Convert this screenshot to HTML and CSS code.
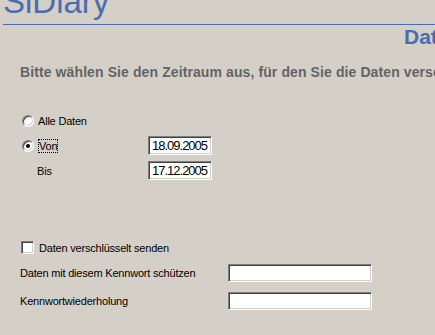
FILE: index.html
```html
<!DOCTYPE html>
<html lang="de">
<head>
    <meta charset="UTF-8">
    <title>SiDiary - Daten senden</title>
    <link rel="stylesheet" href="styles.css">
</head>
<body>
    <div class="header">
        <div class="logo">SiDiary</div>
    </div>
    <h2 class="page-title">Daten senden</h2>
    <p class="intro">Bitte wählen Sie den Zeitraum aus, für den Sie die Daten verschicken möchten.</p>

    <div class="range">
        <div class="range-row">
            <label class="option"><span class="radio"></span><span>Alle Daten</span></label>
            <span></span>
        </div>
        <div class="range-row">
            <label class="option"><span class="radio checked"></span><span class="focus">Von</span></label>
            <span class="field date">18.09.2005</span>
        </div>
        <div class="range-row">
            <span class="sub-label">Bis</span>
            <span class="field date">17.12.2005</span>
        </div>
    </div>

    <label class="option encrypt"><span class="checkbox"></span><span>Daten verschlüsselt senden</span></label>

    <div class="password">
        <span>Daten mit diesem Kennwort schützen</span>
        <span class="field wide"></span>
        <span>Kennwortwiederholung</span>
        <span class="field wide"></span>
    </div>
</body>
</html>
```

FILE: styles.css
```css
body {
    margin: 0;
    padding: 0;
    background-color: #d4d0c8;
    font-family: "Liberation Sans", Arial, sans-serif;
    font-size: 11px;
    letter-spacing: -0.2px;
    color: #000;
    overflow: hidden;
    width: 435px;
    height: 335px;
}

.header {
    margin-left: 3px;
}

.logo {
    height: 24px;
    line-height: 4px;
    font-size: 33px;
    letter-spacing: 0;
    color: #4a6cb0;
    border-bottom: 1px solid #4a6cb0;
    white-space: nowrap;
    overflow: visible;
}

.page-title {
    margin: 1px 0 0 0;
    padding-left: 404px;
    font-size: 21px;
    line-height: 21px;
    letter-spacing: 0;
    color: #4a6cb0;
    white-space: nowrap;
}

.intro {
    margin: 17px 0 0 0;
    padding-left: 20px;
    font-size: 14px;
    line-height: 16px;
    font-weight: bold;
    letter-spacing: 0.1px;
    color: #646464;
    white-space: nowrap;
}

.range {
    margin-top: 28px;
    padding-left: 22px;
}

.range-row {
    display: grid;
    grid-template-columns: 126px 64px;
    align-items: center;
    height: 25px;
}

.option {
    display: flex;
    align-items: center;
    gap: 4px;
}

.radio,
.checkbox {
    display: inline-block;
    box-sizing: border-box;
    background-color: #fff;
    border: 1px solid;
    border-color: #808080 #fff #fff #808080;
    box-shadow: inset 1px 1px #404040, inset -1px -1px #d4d0c8;
    position: relative;
}

.radio {
    width: 12px;
    height: 12px;
    border-radius: 50%;
}

.radio.checked::after {
    content: "";
    position: absolute;
    left: 3px;
    top: 3px;
    width: 4px;
    height: 4px;
    border-radius: 50%;
    background-color: #000;
}

.focus {
    display: inline-block;
    line-height: 12px;
    outline: 1px dotted #000;
    margin-left: 1px;
}

.sub-label {
    padding-left: 15px;
}

.field {
    display: block;
    box-sizing: border-box;
    background-color: #fff;
    border: 1px solid;
    border-color: #808080 #fff #fff #808080;
    box-shadow: inset 1px 1px #404040, inset -1px -1px #d4d0c8;
}

.date {
    width: 64px;
    height: 19px;
    padding-left: 3px;
    font-size: 13px;
    letter-spacing: -1px;
    line-height: 17px;
    overflow: hidden;
    white-space: nowrap;
}

.encrypt {
    margin: 58px 0 0 21px;
    height: 13px;
    gap: 5px;
}

.checkbox {
    width: 13px;
    height: 13px;
}

.password {
    display: grid;
    grid-template-columns: 208px 144px;
    row-gap: 10px;
    align-items: center;
    margin-top: 10px;
    padding-left: 20px;
}

.wide {
    height: 18px;
}
```
